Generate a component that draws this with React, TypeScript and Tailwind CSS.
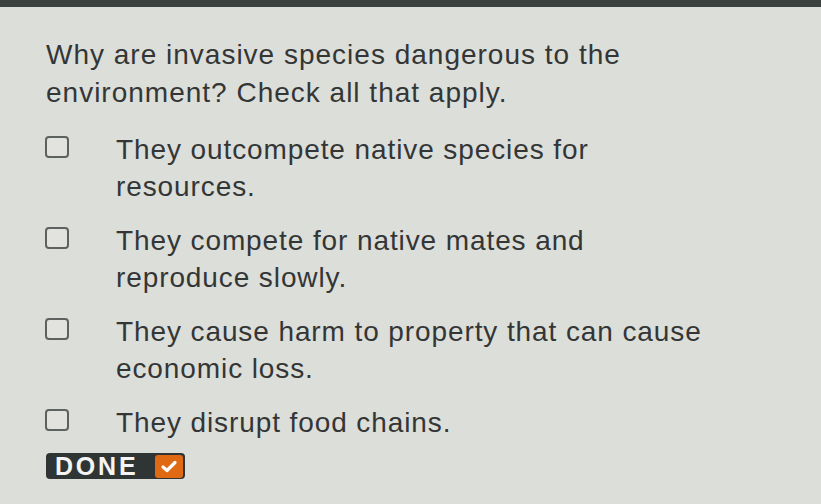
import React from 'react'

const options = [
  ['They outcompete native species for', 'resources.'],
  ['They compete for native mates and', 'reproduce slowly.'],
  ['They cause harm to property that can cause', 'economic loss.'],
  ['They disrupt food chains.'],
]

export default function App() {
  return (
    <div className="w-[821px] h-[504px] overflow-hidden bg-[#dcdeda] flex flex-col" style={{ fontFamily: '"Liberation Sans", Arial, sans-serif' }}>
      <div className="h-[7px] bg-[#3b413e] shrink-0" />
      <div className="pl-[46px] pt-[29px] text-[#343636]">
        <p className="text-[28px] leading-[38px] tracking-[1px]">
          Why are invasive species dangerous to the
          <br />
          environment? Check all that apply.
        </p>
        <ul className="mt-[19px] flex flex-col gap-[17px]">
          {options.map((lines, i) => (
            <li key={i} className="flex items-start">
              <span className="mt-[5px] ml-[-1px] w-[24px] h-[22px] border-2 border-[#5d615f] rounded-[4px] bg-[#e2e3df] shrink-0" />
              <span className="ml-[47px] text-[28px] leading-[37px] tracking-[0.9px]">
                {lines.map((l, j) => (
                  <span key={j} className="block">{l}</span>
                ))}
              </span>
            </li>
          ))}
        </ul>
        <button className="mt-[12px] flex items-center h-[26px] rounded-[4px] bg-[#2f3535] pl-[9px] pr-[2px]">
          <span className="text-[#f4f4f4] font-bold text-[25px] tracking-[2.8px] leading-none">DONE</span>
          <span className="ml-[17px] w-[28px] h-[23px] rounded-[3px] bg-[#e06a14] flex items-center justify-center">
            <svg width="18" height="15" viewBox="0 0 18 15">
              <path d="M3 8 L7 11.5 L15 3.5" fill="none" stroke="white" strokeWidth="3.2" strokeLinecap="round" strokeLinejoin="round" />
            </svg>
          </span>
        </button>
      </div>
    </div>
  )
}
